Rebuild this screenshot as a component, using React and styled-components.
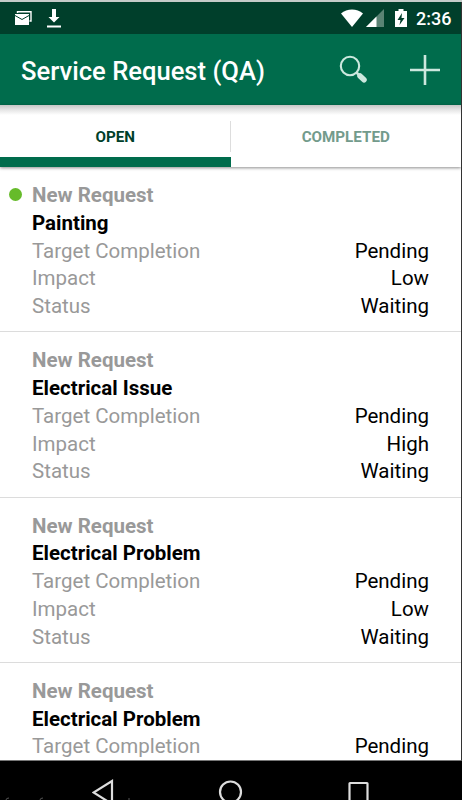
import React from 'react';
import styled, { createGlobalStyle } from 'styled-components';

const GlobalStyle = createGlobalStyle`
  body {
    margin: 0;
    background: #000;
    overflow: hidden;
  }
  * {
    box-sizing: border-box;
  }
`;

const Phone = styled.div`
  display: flex;
  flex-direction: column;
  width: 462px;
  height: 800px;
  overflow: hidden;
  background-color: #fff;
  border-top: 2px solid #c4cbc8;
  font-family: Roboto, sans-serif;
`;

const Screen = styled.div`
  display: flex;
  flex-direction: column;
  height: 759px;
  flex: none;
  overflow: hidden;
  border-right: 1px solid #333;
  border-bottom: 1px solid #777;
`;

const StatusBar = styled.div`
  display: flex;
  align-items: center;
  flex: none;
  height: 32px;
  padding: 0 9px 0 14px;
  background-color: #003f2b;
  color: #fff;
`;

const StatusIcon = styled.svg`
  display: block;
  flex: none;
  margin-left: ${props => props.$gap || 0}px;
`;

const Clock = styled.span`
  width: 36px;
  margin: 1px 0 0 8px;
  font-size: 18px;
  font-weight: 500;
  line-height: 32px;
  white-space: nowrap;
`;

const Spacer = styled.div`
  flex: 1;
`;

const AppBar = styled.header`
  display: flex;
  align-items: center;
  flex: none;
  height: 71px;
  padding: 0 20px 0 21px;
  background-color: #006c4c;
  color: #fff;
`;

const Title = styled.h1`
  flex: 1;
  margin: 3px 0 0;
  font-size: 25.6px;
  font-weight: 500;
  line-height: 32px;
  white-space: nowrap;
`;

const IconButton = styled.button`
  display: block;
  padding: 0;
  margin-left: ${props => props.$gap || 0}px;
  border: none;
  background: none;
  line-height: 0;
  cursor: pointer;
`;

const Tabs = styled.nav`
  display: flex;
  position: relative;
  flex: none;
  height: 62px;
  background: linear-gradient(#c6c6c6, #e6e6e6 5px, #fff 10px);
  box-shadow: 0 1px 3px rgba(0, 0, 0, 0.45);
`;

const Tab = styled.div`
  display: flex;
  align-items: center;
  justify-content: center;
  width: 231px;
  padding-top: ${props => (props.$active ? 12 : 2)}px;
  border-bottom: ${props => (props.$active ? '10px solid #006c4c' : 'none')};
  color: ${props => (props.$active ? '#003f2b' : '#739b8c')};
  font-size: 15.2px;
  font-weight: 700;
`;

const TabDivider = styled.div`
  width: 1px;
  height: 31px;
  margin: 16px 0 0 -1px;
  background-color: #ddd;
`;

const List = styled.main`
  flex: 1;
  overflow: hidden;
`;

const Request = styled.section`
  position: relative;
  height: 165.3px;
  padding: 15px 32px 0;
  border-bottom: 1px solid #dcdcdc;
  font-size: 20.5px;
  line-height: 27.8px;
`;

const Dot = styled.span`
  position: absolute;
  left: 9px;
  top: 21px;
  width: 13px;
  height: 13px;
  border-radius: 50%;
  background-color: #66bb2a;
`;

const Heading = styled.div`
  color: ${props => (props.$muted ? '#999' : '#000')};
  font-weight: 700;
`;

const Row = styled.div`
  display: flex;
  justify-content: space-between;
`;

const Label = styled.span`
  color: #999;
`;

const Value = styled.span`
  color: #000;
`;

const NavBar = styled.footer`
  display: flex;
  position: relative;
  flex: none;
  height: 39px;
  padding: 17px 0 0 92px;
  overflow: hidden;
  background-color: #000;
`;

const NavIcon = styled.svg`
  display: block;
  flex: none;
  margin-left: ${props => props.$gap || 0}px;
`;

const EdgeMarks = styled.svg`
  position: absolute;
  left: 0;
  bottom: 0;
`;

const requests = [
  { name: 'Painting', impact: 'Low', unread: true },
  { name: 'Electrical Issue', impact: 'High' },
  { name: 'Electrical Problem', impact: 'Low' },
  { name: 'Electrical Problem' },
];

const ServiceRequest = ({ name, impact, unread }) => (
  <Request>
    {unread && <Dot />}
    <Heading $muted>New Request</Heading>
    <Heading>{name}</Heading>
    <Row>
      <Label>Target Completion</Label>
      <Value>Pending</Value>
    </Row>
    {impact && (
      <>
        <Row>
          <Label>Impact</Label>
          <Value>{impact}</Value>
        </Row>
        <Row>
          <Label>Status</Label>
          <Value>Waiting</Value>
        </Row>
      </>
    )}
  </Request>
);

const App = () => (
  <>
    <GlobalStyle />
    <Phone>
      <Screen>
        <StatusBar>
          {/* mail */}
          <StatusIcon width="18" height="16" viewBox="0 0 18 16">
            <path d="M3.5 3V1.8H17V11h-1.5" fill="none" stroke="#fff" strokeWidth="1.4" />
            <path d="M1 4h14v11H1z" fill="#fff" />
            <path d="M1 5.5l7 4L15 5.5" fill="none" stroke="#003f2b" strokeWidth="1" />
          </StatusIcon>
          {/* download */}
          <StatusIcon $gap={14} width="16" height="20" viewBox="0 0 16 20">
            <path d="M6 1h4v8h3.5L8 14.5 2.500 9H6zM1 17.500h14v2H1z" fill="#fff" />
          </StatusIcon>
          <Spacer />
          {/* wifi */}
          <StatusIcon width="24" height="20" viewBox="0 0 24 20">
            <path d="M1 5.500C7 .3 17 .3 23 5.500L12 19z" fill="#fff" />
          </StatusIcon>
          {/* signal */}
          <StatusIcon $gap={2} width="18" height="18" viewBox="0 0 18 18">
            <path d="M18 0v18H0z" fill="#5a8374" />
            <path d="M10.500 7.500V18H0z" fill="#fff" />
          </StatusIcon>
          {/* battery */}
          <StatusIcon $gap={10} width="14" height="20" viewBox="0 0 14 20">
            <path d="M4.500 1h5v2h3.500v16H1V3h3.500z" fill="#fff" />
            <path d="M8 5L3.500 12H6.500L5.500 17 10.500 10H7.500z" fill="#003f2b" />
          </StatusIcon>
          <Clock>2:36</Clock>
        </StatusBar>
        <AppBar>
          <Title>Service Request (QA)</Title>
          <IconButton aria-label="Search">
            <svg width="30" height="30" viewBox="0 0 30 30">
              <circle cx="12" cy="11" r="9.200" fill="none" stroke="#cce8de" strokeWidth="2.100" />
              <path d="M18.500 17.500l3 3" stroke="#cce8de" strokeWidth="2.500" />
              <path d="M22 21l4 3.800" stroke="#cce8de" strokeWidth="5.500" strokeLinecap="round" />
            </svg>
          </IconButton>
          <IconButton $gap={41} aria-label="Add">
            <svg width="32" height="32" viewBox="0 0 32 32">
              <path d="M16 1v30M1 16h30" stroke="#cce8de" strokeWidth="2.600" />
            </svg>
          </IconButton>
        </AppBar>
        <Tabs>
          <Tab $active>OPEN</Tab>
          <TabDivider />
          <Tab>COMPLETED</Tab>
        </Tabs>
        <List>
          {requests.map((request, index) => (
            <ServiceRequest key={index} {...request} />
          ))}
        </List>
      </Screen>
      <NavBar>
        {/* back */}
        <NavIcon width="22" height="28" viewBox="0 0 22 28">
          <path d="M20 3v23L1.500 14.500z" fill="none" stroke="#ddd" strokeWidth="2.200" />
        </NavIcon>
        {/* home */}
        <NavIcon $gap={104} width="26" height="28" viewBox="0 0 26 28">
          <circle cx="12.500" cy="14" r="10.500" fill="none" stroke="#ddd" strokeWidth="2.200" />
        </NavIcon>
        {/* recents */}
        <NavIcon $gap={104} width="22" height="28" viewBox="0 0 22 28">
          <rect x="1.500" y="5" width="18" height="20" rx="0.500" fill="none" stroke="#ddd" strokeWidth="2.200" />
        </NavIcon>
        <EdgeMarks width="140" height="3" viewBox="0 0 140 3">
          <path d="M6 3q0-2 3-2M40 3q0-2 3-2M129 1v2" fill="none" stroke="#555" />
        </EdgeMarks>
      </NavBar>
    </Phone>
  </>
);

export default App;
